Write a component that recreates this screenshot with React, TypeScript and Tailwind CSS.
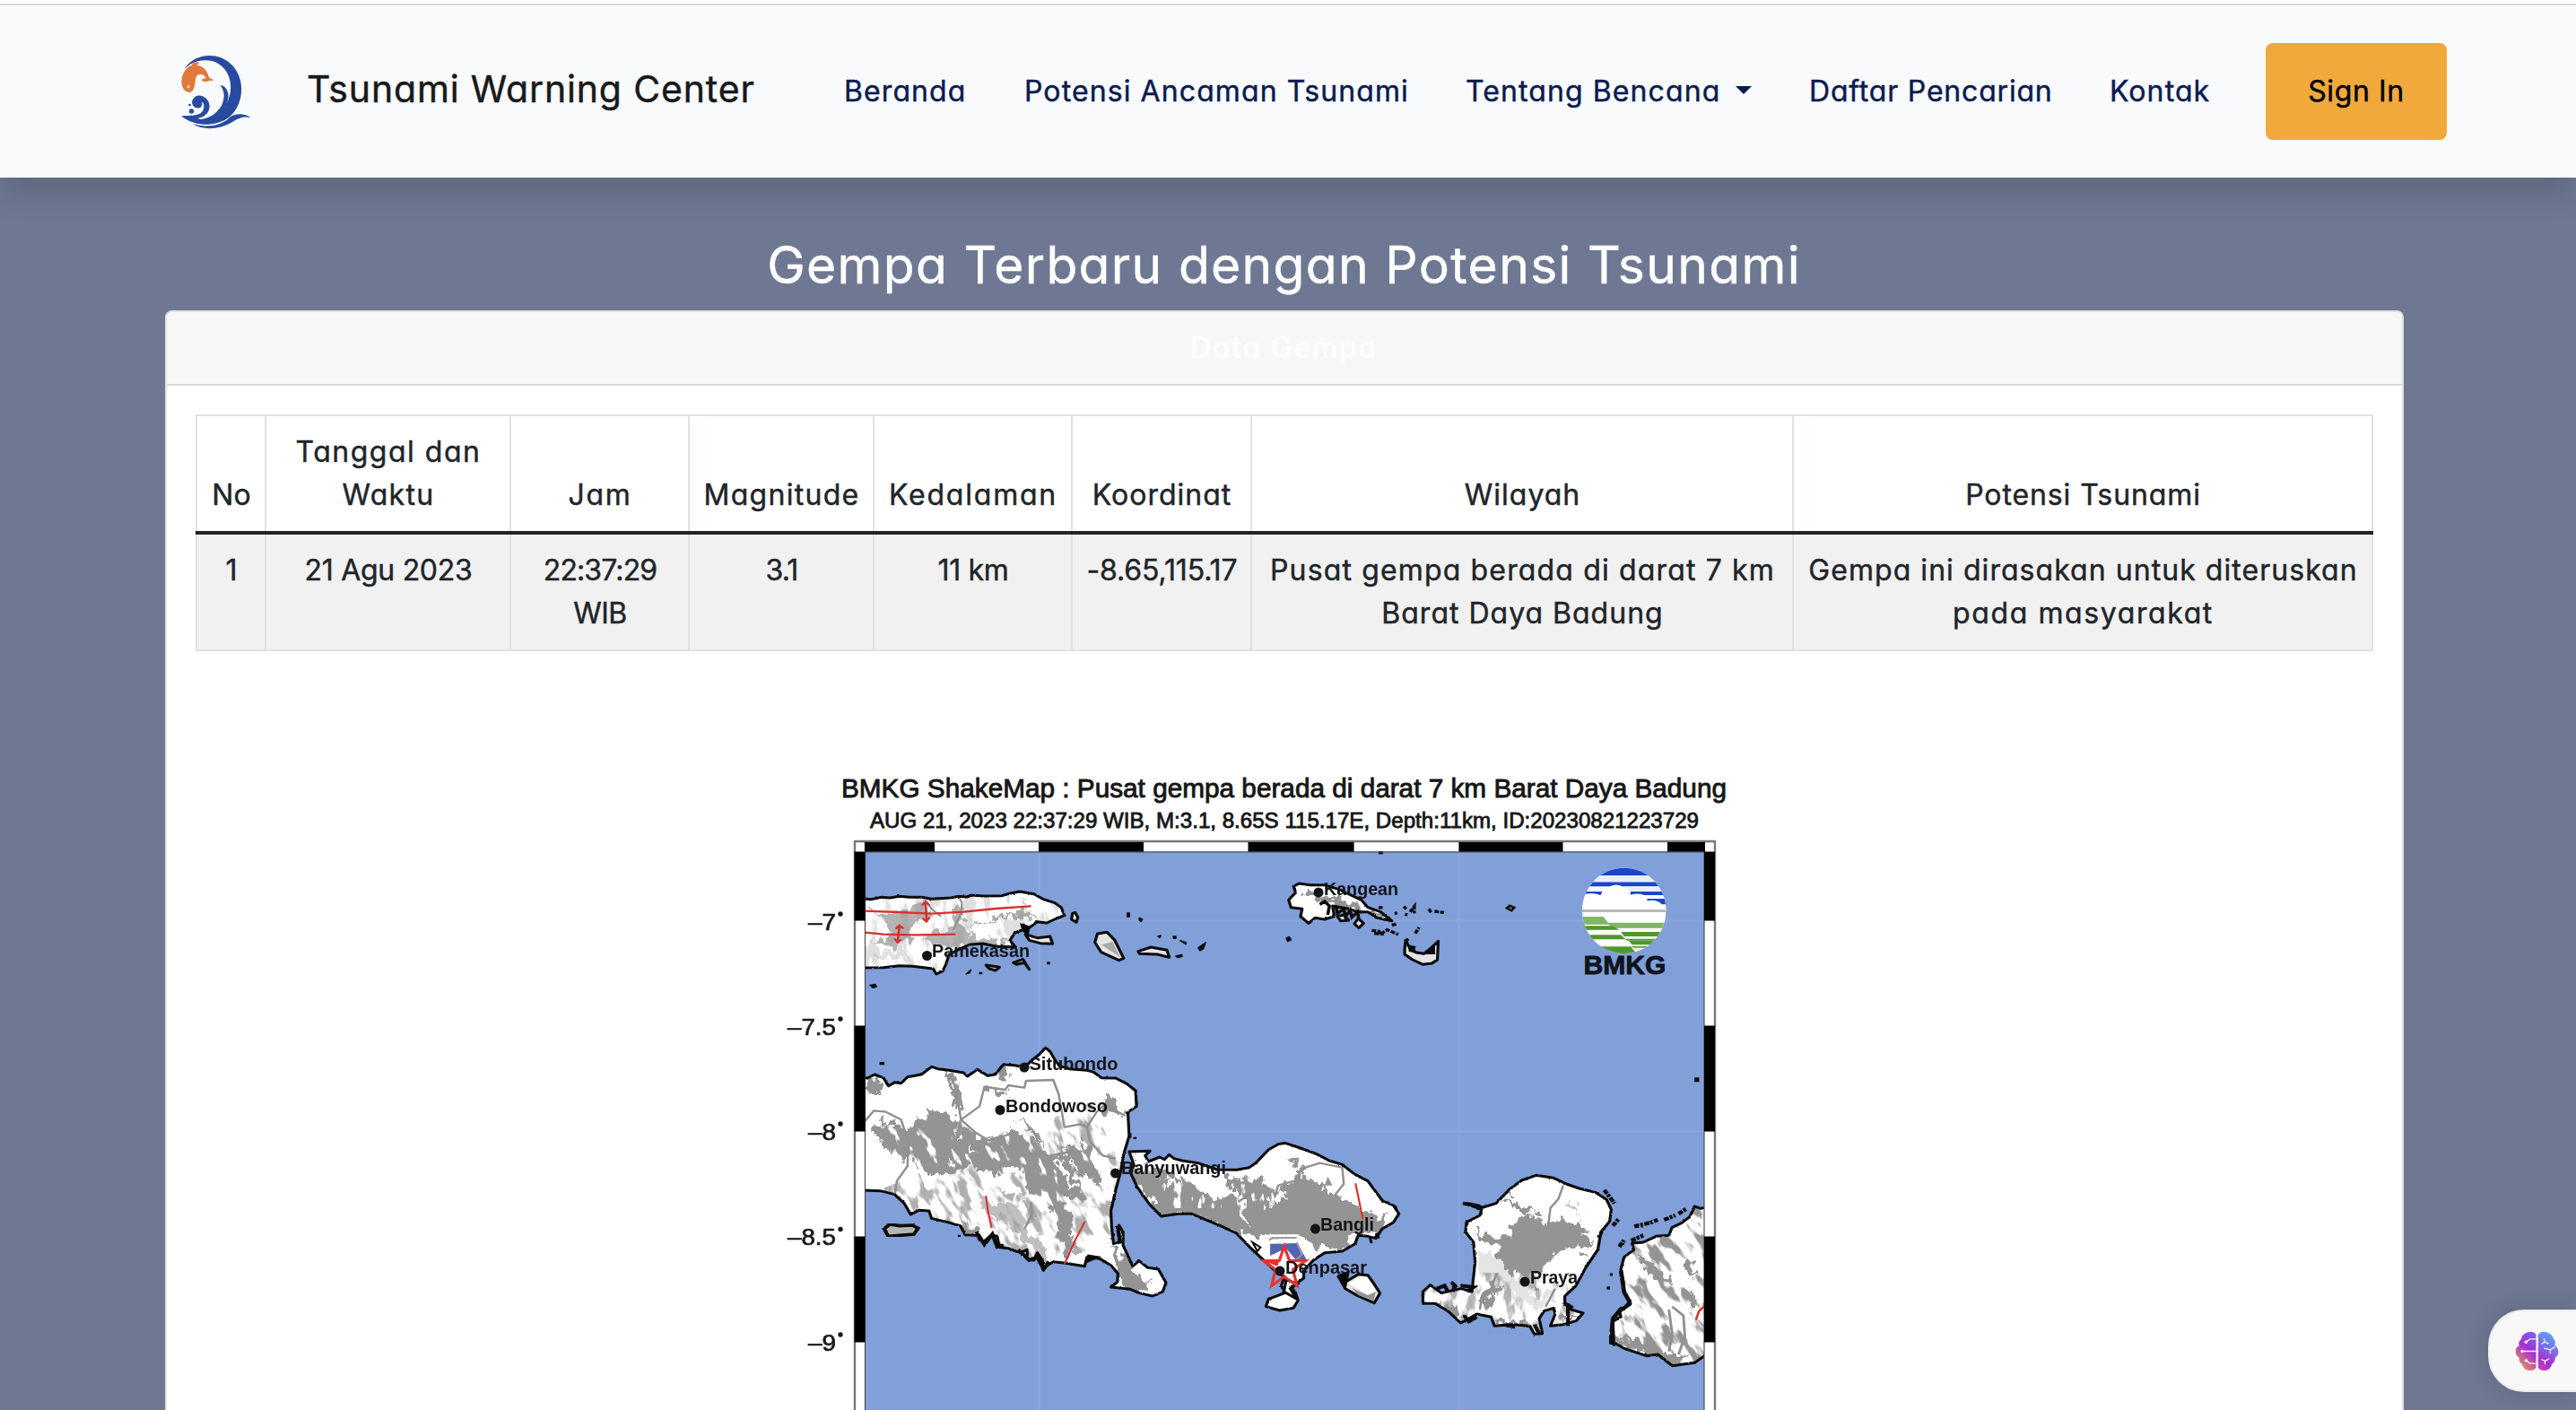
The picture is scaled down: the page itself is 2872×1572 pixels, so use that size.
import type { ReactNode } from "react";

const SEA = "#819fd9";
const RELIEF = "#949494";

function WaveLogo() {
  return (
    <svg viewBox="60 60 245 255" className="h-[85px] w-[82px]" aria-hidden="true">
      <path
        fill="#274b9f"
        d="M76 111C95 82 125 66 160 66C222 66 267 116 267 178C267 245 222 294 160 297C120 298 88 287 66 268C86 275 112 277 136 272C180 279 231 235 231 172C231 122 197 82 150 82C120 80 96 92 76 111Z"
      />
      <path fill="#f8fafc" d="M66 267C98 271 128 266 148 246L215 236L204 262C180 281 150 282 122 275C100 277 82 274 66 267Z" />
      <path fill="#274b9f" d="M66 268C90 266 138 272 141 241C143 228 138 220 134 224C138 238 127 243 116 241C105 237 99 226 103 215C109 201 124 196 137 202C154 209 162 224 160 240C157 262 139 273 120 276C150 275 184 262 200 234C212 210 212 184 196 166C206 163 220 175 223 195C226 225 205 258 178 272C148 287 94 286 66 268Z" />
      <path fill="#274b9f" d="M88 277C130 284 190 272 222 226L240 250C215 288 180 297 150 297C125 296 103 289 88 277Z" />
      <path fill="#274b9f" d="M103 294C150 306 188 296 222 275C248 258 276 258 299 274C272 267 254 278 238 287C198 313 142 318 103 294Z" />
      <path fill="#f8fafc" d="M98 291C150 303 200 296 236 265C204 301 150 311 98 291Z" />
      <path fill="#f8fafc" d="M121 276C150 272 172 264 190 247C176 266 156 276 130 279Z" />
      <circle cx="100" cy="252" r="8" fill="#274b9f" />
      <circle cx="94" cy="231" r="4" fill="#274b9f" />
      <path
        fill="#e07a3a"
        d="M101 98C104 90 113 86 125 89C124 94 120 97 116 98C136 99 151 112 157 134C161 144 168 143 175 147C166 151 162 150 159 149C155 154 146 156 132 148C136 142 145 144 148 140C141 128 131 126 122 130C109 138 116 160 107 178C102 189 93 191 84 187C70 179 64 161 68 140C74 115 88 102 101 98Z"
      />
      <ellipse cx="90" cy="170" rx="3" ry="5" fill="#fff" />
    </svg>
  );
}

function BrainIcon() {
  return (
    <svg viewBox="190 160 148 136" className="h-[45px] w-[49px]" aria-hidden="true">
      <defs>
        <linearGradient id="brainLeft" x1="0.75" y1="0" x2="0.25" y2="1">
          <stop offset="0" stopColor="#7b62e6" />
          <stop offset="0.42" stopColor="#a42fd8" />
          <stop offset="0.68" stopColor="#c85f9a" />
          <stop offset="1" stopColor="#e3a04c" />
        </linearGradient>
        <linearGradient id="brainRight" x1="0.6" y1="0" x2="0.3" y2="1">
          <stop offset="0" stopColor="#5aa6f2" />
          <stop offset="0.45" stopColor="#7a6be8" />
          <stop offset="0.75" stopColor="#a82fd2" />
          <stop offset="1" stopColor="#bd3fc0" />
        </linearGradient>
      </defs>
      <path
        fill="url(#brainLeft)"
        d="M261 172C255 162 240 159 228 166C219 169 212 177 211 187C203 193 201 202 204 209C195 213 192 221 192 230C192 239 197 246 204 249C202 259 207 268 214 272C217 286 229 294 241 293C250 293 257 289 261 283Z"
      />
      <path
        fill="url(#brainRight)"
        d="M268 172C274 162 288 159 300 165C312 169 318 178 319 185C325 191 327 200 324 208C332 213 337 221 336 232C335 241 330 247 325 249C326 259 322 267 314 271C311 285 302 293 289 293C279 294 272 289 268 283Z"
      />
      <g stroke="#f6edf9" strokeWidth="4" fill="none" strokeLinecap="round">
        <path d="M261 187H240L228 196M261 228H215M261 269H240L228 259" />
        <path d="M280 203L290 197L302 202M290 197L288 186M289 218L309 223L323 214M309 223V235M280 256L291 261L304 254M291 261V270" />
      </g>
      <g fill="#f6edf9">
        <circle cx="227" cy="197" r="5" />
        <circle cx="214" cy="228" r="5" />
        <circle cx="227" cy="259" r="5" />
      </g>
    </svg>
  );
}

const madura =
  "M270 484L310 488L345 481L370 483L400 478L430 481L470 481L500 487L560 483L585 478L610 480L625 474L660 477L720 476L745 468L775 462L820 470L850 488L885 500L905 515L915 542L890 552L860 567L830 563L805 583L785 573L790 588L760 600L745 625L762 648L700 645L660 636L620 639L600 648L555 672L545 705L535 728L515 738L505 720L440 712L400 710L350 716L270 717Z";
const java =
  "M270 180L300 186L322 174L350 185L366 212L385 200L405 203L425 182L470 173L500 148L520 155L555 160L600 168L612 180L643 157L675 178L698 174L725 140L760 143L790 150L815 125L835 108L857 84L872 100L885 125L900 145L930 155L985 160L1005 165L1030 185L1075 186L1110 205L1137 228L1140 280L1113 300L1117 380L1100 440L1090 500L1075 560L1060 630L1062 680L1068 740L1085 735L1085 678L1098 700L1098 745L1128 815L1148 797L1175 820L1208 825L1232 870L1222 900L1190 915L1150 905L1120 892L1060 885L1080 868L1082 840L1060 812L1025 790L985 785L978 815L918 805L880 800L862 812L848 826L846 795L830 770L820 795L800 790L798 760L775 770L740 755L712 752L705 715L688 710L660 735L640 712L605 710L590 680L550 668L500 655L492 630L460 628L435 642L415 605L385 575L340 563L270 560Z";
const bali =
  "M-395 432L-330 430L-345 445L-335 465L-300 450L-285 458L-270 442L-255 455L-230 462L-180 470L-120 492L-60 493L-20 485L0 470L40 425L70 407L92 403L140 420L190 440L230 462L270 475L310 508L350 530L395 595L430 612L447 640L430 668L395 690L375 722L350 715L320 712L310 740L270 765L215 770L180 795L150 830L150 855L128 872L112 885L125 905L132 930L118 955L75 963L32 950L40 925L90 905L80 880L90 850L60 830L20 790L-15 755L-60 705L-110 680L-200 640L-240 640L-295 648L-330 610L-370 550L-392 500L-380 478Z";
const lombok =
  "M650 605L680 610L710 618L750 605L790 560L830 528L875 511L930 520L970 540L1010 555L1060 568L1095 592L1110 625L1105 665L1078 700L1068 760L1030 820L1000 880L965 915L965 940L985 960L1022 972L1000 998L960 1010L920 1015L935 975L930 955L900 965L885 990L895 1040L870 1042L855 1015L800 1010L745 1015L735 985L690 975L640 1005L600 965L560 940L522 940L522 900L545 878L580 905L640 890L675 900L685 800L680 735L655 700L658 668L700 645L705 625Z";
const sumbawa =
  "M1410 618L1390 622L1370 615L1355 650L1330 670L1300 685L1290 712L1250 715L1210 735L1175 738L1180 760L1150 785L1140 825L1148 870L1150 905L1170 940L1135 960L1140 985L1115 1000L1118 1070L1150 1090L1220 1115L1255 1110L1300 1148L1370 1138L1410 1108Z";

function Land({ id, d, children }: { id: string; d: string; children?: ReactNode }) {
  return (
    <g>
      <clipPath id={id}>
        <path d={d} />
      </clipPath>
      <path d={d} fill="#fff" />
      <g clipPath={`url(#${id})`}>{children}</g>
      <path d={d} fill="none" stroke="#0c0c0c" strokeWidth="9" strokeLinejoin="round" filter="url(#coast)" />
    </g>
  );
}

function Islet({ d }: { d: string }) {
  return <path d={d} fill="#e4e4e4" stroke="#0c0c0c" strokeWidth="9" strokeLinejoin="round" />;
}

const townLabels: [string, number, number, number, number, number][] = [
  ["Pamekasan", 1039, 1067, 1033.5, 1065.5, 109],
  ["Kangean", 1476, 997.5, 1470, 995, 83],
  ["Situbondo", 1147.5, 1192.5, 1142, 1190, 99],
  ["Bondowoso", 1121, 1239.5, 1115, 1237.5, 114],
  ["Banyuwangi", 1250, 1309, 1243.5, 1308, 117],
  ["Bangli", 1472, 1372, 1466.5, 1370, 60],
  ["Denpasar", 1433, 1419.5, 1427, 1417, 91],
  ["Praya", 1706, 1431, 1700, 1429, 53],
];

const latitudes: [string, number, number, number][] = [
  ["–7", 1036.5, 901, 31],
  ["–7.5", 1153.5, 878, 54],
  ["–8", 1270.5, 901, 31],
  ["–8.5", 1388, 878, 54],
  ["–9", 1505.5, 901, 31],
];

function ShakeMap() {
  return (
    <svg viewBox="872 840 1120 732" className="h-[732px] w-[1120px] shrink-0 font-['Liberation_Sans',Arial,sans-serif] [-webkit-text-stroke:0]">
      <defs>
        <filter id="coast" x="-5%" y="-5%" width="110%" height="110%" colorInterpolationFilters="sRGB">
          <feTurbulence type="fractalNoise" baseFrequency="0.09" numOctaves="2" seed="4" />
          <feDisplacementMap in="SourceGraphic" scale="6" xChannelSelector="R" yChannelSelector="G" />
        </filter>
        <filter id="rough" x="-10%" y="-10%" width="120%" height="120%" colorInterpolationFilters="sRGB">
          <feTurbulence type="fractalNoise" baseFrequency="0.04 0.03" numOctaves="3" seed="9" />
          <feDisplacementMap in="SourceGraphic" scale="60" xChannelSelector="R" yChannelSelector="G" />
          <feGaussianBlur stdDeviation="1.5" />
        </filter>
        <filter id="ridges" x="0" y="0" width="100%" height="100%" colorInterpolationFilters="sRGB">
          <feTurbulence type="fractalNoise" baseFrequency="0.03 0.011" numOctaves="3" seed="21" />
          <feColorMatrix values="0 0 0 0 0.58  0 0 0 0 0.58  0 0 0 0 0.58  8 0 0 0 -4.1" />
        </filter>
        <filter id="glints" x="0" y="0" width="100%" height="100%" colorInterpolationFilters="sRGB">
          <feTurbulence type="fractalNoise" baseFrequency="0.035 0.014" numOctaves="3" seed="33" />
          <feColorMatrix values="0 0 0 0 1  0 0 0 0 1  0 0 0 0 1  12 0 0 0 -7.3" />
        </filter>
        <clipPath id="sea">
          <rect x="964" y="949" width="936" height="623" />
        </clipPath>
        <clipPath id="logoDisc">
          <ellipse cx="1150" cy="526" rx="131" ry="143" />
        </clipPath>
      </defs>

      <text x="938" y="889" fontSize="30" textLength="987" lengthAdjust="spacingAndGlyphs" fill="#161616" stroke="#161616" strokeWidth="0.9">
        BMKG ShakeMap : Pusat gempa berada di darat 7 km Barat Daya Badung
      </text>
      <text x="970" y="923" fontSize="23.5" textLength="924" lengthAdjust="spacingAndGlyphs" fill="#161616" stroke="#161616" strokeWidth="0.8">
        AUG 21, 2023 22:37:29 WIB, M:3.1, 8.65S 115.17E, Depth:11km, ID:20230821223729
      </text>

      <rect x="964" y="949" width="936" height="640" fill={SEA} />
      <g clipPath="url(#sea)">
        <path d="M1158.5 949V1572M1626.5 949V1572M964 1026.5H1900M964 1261.5H1900" stroke="#8ba7de" strokeWidth="2.5" />

        <g transform="translate(860 840) scale(.35714 .33333)">
          <Land id="madura" d={madura}>
            <g filter="url(#rough)" fill={RELIEF}>
              <path d="M290 520L360 545L430 520L480 490L500 540L450 560L430 620L390 650L330 640L300 650L380 600L350 560Z" opacity=".7" />
              <path d="M560 545L590 510L600 530L590 580L640 610L740 630L700 645L600 640L560 660L470 620L500 600L570 590Z" opacity=".7" />
              <path d="M600 570L700 565L740 540L820 550L800 530L780 480L800 520L740 530L660 575Z" opacity=".8" />
              <path d="M300 670L360 665L420 640L430 700L400 690Z" opacity=".3" />
            </g>
            <rect x="250" y="440" width="700" height="300" filter="url(#ridges)" opacity=".3" />
            <path d="M585 480L595 500L592 535L568 590M480 490L500 520L530 545" fill="none" stroke="#909090" strokeWidth="6" />
          </Land>
          <Islet d="M793 605L830 617L870 612L878 637L840 635L805 625Z" />
          <path d="M780 572L805 580L800 610L785 590Z" stroke="#0c0c0c" strokeWidth="6" />
          <Islet d="M948 532L957 548L952 565L937 555L940 535Z" />
          <Islet d="M1048 598L1072 625L1100 685L1085 692L1030 665L1010 632L1018 603Z" />
          <path d="M1030 640L1065 630L1090 682Z" fill="#aaa" />
          <Islet d="M1145 662L1185 648L1235 658L1242 682L1205 672L1150 670Z" />
          <Islet d="M670 708L712 715L700 726L680 720Z" />
          <Islet d="M755 700L785 688L805 722L790 700L765 706Z" />
          <g fill="#0c0c0c" stroke="#0c0c0c" strokeWidth="4" strokeLinejoin="round">
            <path d="M1111 534h7v12h-7zM1148 550l10 4l-3 8l-6-3zM1206 612l10-3l-3 7zM1254 612h9v7h-7zM1276 626l18 6v6zM1262 678l20-5v6l-12 4zM1332 650l24-18l-8 22l-10 6zM608 738l15-14l-4 10zM650 733h7v4h-7zM862 699h6v5h-6zM308 775l16-3l5 8l-12 4zM340 1034h11v6h-11z" />
          </g>
          <g stroke="#d9302c" strokeWidth="7" fill="none" strokeLinecap="round">
            <path d="M292 527L400 531L500 536L600 530L700 519L808 511M292 599L350 605L450 607L572 605" />
            <path d="M481 497L485 562M472 506L480 497L492 506M474 553L484 562L493 550M400 575L394 632M390 585L400 575L410 584M386 622L394 632L403 624" />
          </g>
        </g>

        <g transform="translate(1400 840) scale(.35714 .33333)">
          <Land
            id="kangean"
            d="M118 445L135 435L170 440L215 440L260 455L300 475L330 490L350 515L390 530L425 560L380 550L350 530L320 530L290 520L240 510L245 545L215 555L185 550L165 568L140 545L145 520L110 515L103 490L125 465Z"
          >
            <path filter="url(#rough)" fill={RELIEF} d="M160 445L200 480L270 490L330 510L430 560L340 540L240 505L150 480Z" />
          </Land>
          <Islet d="M255 545L275 540L290 558L265 560Z" />
          <Islet d="M320 552L337 568L322 583L308 570Z" />
          <path
            d="M200 505L215 495L230 510L225 540M250 510L255 535L275 520L280 545L295 525L300 548L318 530L322 555"
            fill="none"
            stroke="#0c0c0c"
            strokeWidth="10"
          />
          <Islet d="M468 625L480 650L500 665L525 670L548 650L570 628L567 690L550 702L522 706L490 690L465 672L465 655Z" />
          <path d="M475 640L500 645L495 665L530 668L560 640L560 672L510 672L478 662Z" fill="#0c0c0c" />
          <path
            fill="none"
            stroke="#0c0c0c"
            strokeWidth="10"
            strokeDasharray="14 4"
            d="M362 592L385 595L390 605L410 590L445 605M370 602L400 604M425 575L440 570M462 512L470 520M466 538L474 540M482 530L495 512V535M540 520L550 535M558 528L588 532M498 602L510 582M434 536L442 533M468 630L476 620"
          />
          <path fill="#0c0c0c" stroke="#0c0c0c" strokeWidth="5" d="M782 518l10-10l17 7l-10 12zM96 618l8-4l6 9l-10 5zM386 329h9v5h-9zM1372 1086h10v10h-10zM386 513h8v5h-8z" />
          <path d="M789 517L799 513L800 522Z" fill="#777" />

          <ellipse cx="1150" cy="526" rx="131" ry="143" fill="#fff" />
          <g clipPath="url(#logoDisc)">
            <path fill="#1b46c9" d="M1010 380H1290V408H1010ZM1010 430H1290V445H1144Q1125 434 1106 445H1010ZM1010 462H1082L1076 475Q1050 462 1020 473ZM1170 462H1290V474H1214Q1190 466 1170 473ZM1222 486H1290V505H1268Q1252 486 1222 493Z" />
            <path fill="#e9eefb" d="M1010 408H1290V430H1010ZM1150 445H1290V462H1170Z" />
            <path fill="#b9b9b9" d="M1010 522H1290V531H1010Z" />
            <path fill="#7fb765" d="M1010 546H1085L1100 566H1290V584H1120L1100 572H1010Z" />
            <path fill="#4f982c" d="M1010 577H1115L1135 590H1010ZM1140 597H1290V612H1150ZM1010 607H1140L1155 622H1010ZM1165 627H1290V640H1175ZM1150 620H1290V626H1160ZM1010 646H1170L1190 670H1010ZM1170 645H1290V650H1180Z" />
            <path fill="#e6f0e0" d="M1175 650L1290 650V670H1195Z" />
          </g>
        </g>
        <text x="1765.5" y="1085.5" fontSize="29" fontWeight="bold" textLength="92" lengthAdjust="spacingAndGlyphs" fill="#10131a" stroke="#10131a" strokeWidth="0.8">
          BMKG
        </text>

        <g transform="translate(860 1140) scale(.35714 .33333)">
          <Land id="java" d={java}>
            <rect x="250" y="420" width="850" height="440" filter="url(#ridges)" opacity=".75" transform="rotate(-24 650 600) translate(0 20)" />
            <g filter="url(#rough)" fill={RELIEF}>
              <path d="M310 350L370 325L420 370L450 320L500 290L560 310L600 350L640 370L680 400L740 355L830 400L880 450L910 540L930 640L950 740L915 800L890 660L850 590L800 560L790 500L740 490L690 510L620 480L560 510L500 510L430 460L380 440L330 390Z" />
              <path d="M700 400L740 375L800 380L850 430L890 440L960 400L1010 430L1000 480L1040 550L960 500L930 450L980 600L870 560L840 430Z" />
              <path d="M660 215L720 220L740 250L690 235ZM770 320L800 340L860 410L830 400Z" />
              <path d="M1040 240L1085 265L1100 310L1040 300ZM705 150L745 165L740 195L710 190ZM300 190L345 195L335 240L305 235ZM545 165L570 180L600 310L575 290Z" />
              <path d="M1060 740L1105 790L1130 840L1180 870L1170 900L1090 885ZM590 680L650 690L640 712L600 705Z" />
              <path d="M640 560L700 610L780 600L820 640L800 700L860 760L840 790L780 720L720 660L670 640Z" opacity=".6" />
            </g>
            <rect x="250" y="250" width="850" height="520" filter="url(#glints)" transform="rotate(-24 650 600)" />
            <g filter="url(#rough)" fill="#fff">
              <path d="M690 510L730 500L790 570L760 590L690 540ZM890 450L915 460L950 560L930 560ZM550 440L565 460L560 490ZM575 350L590 380L580 400ZM620 410L640 440L625 440Z" />
            </g>
            <path
              fill="none"
              stroke="#909090"
              strokeWidth="7"
              strokeLinejoin="round"
              d="M292 330L320 295L355 298L405 325L428 400L425 480L392 530L385 575M555 170L575 220L592 325L650 280L665 215L730 225L740 210L790 218L795 195L880 192L897 240L915 350L965 340L985 350L1015 300L1040 275L1105 312M592 325L640 370L680 395L740 375M985 350L995 400L1035 445L1075 455M870 445L920 435L970 430M810 600L815 640L790 690"
            />
          </Land>
          <path d="M640 700L665 742L690 708L705 750L725 745M770 760L805 795L830 785L850 825L866 800M1080 680L1090 740" fill="none" stroke="#0c0c0c" strokeWidth="12" filter="url(#coast)" />
          <path d="M990 780L1018 785L985 800Z" stroke="#0c0c0c" strokeWidth="8" />
          <g filter="url(#coast)">
            <path d="M352 690L370 675L400 680L440 678L458 688L445 708L400 712L365 715Z" fill="#b4b4b4" stroke="#0c0c0c" strokeWidth="11" />
          </g>
          <path d="M338 132h14v8h-14zM582 710h9v7h-9zM1130 383h10v7h-10zM1118 370h6v16h-6z" fill="#0c0c0c" />
          <path d="M670 582L676 630L687 685M978 667L950 725L916 805" fill="none" stroke="#d9302c" strokeWidth="6" strokeLinecap="round" />
        </g>

        <g transform="translate(1400 1140) scale(.35714 .33333)">
          <Land id="bali" d={bali}>
            <g filter="url(#rough)" fill={RELIEF}>
              <path d="M-385 490L-300 485L-220 530L-130 590L-60 580L0 520L60 560L130 520L160 510L230 570L310 610L380 650L430 650L395 680L370 710L300 710L270 750L200 760L140 720L60 710L0 720L-60 700L-200 640L-300 645L-350 570Z" />
              <path d="M95 445L130 455L125 480ZM130 490L150 480L145 530ZM-380 450L-340 455L-330 490L-370 480ZM-100 520L-50 520L0 510L10 560L-60 570Z" />
            </g>
            <rect x="-400" y="440" width="460" height="180" filter="url(#glints)" />
            <g filter="url(#rough)" fill="#fff">
              <path d="M-20 580L-40 610L-20 680L-45 660L-60 600ZM60 570L90 550L100 590L75 600ZM30 590L50 610L40 620ZM200 510L245 500L270 540L230 575L205 540ZM-290 520L-250 530L-235 560ZM-215 530L-180 560L-200 550Z" />
              <path d="M-20 715H60L70 740H150L180 780L160 850H80L20 800Z" />
            </g>
            <path d="M225 515L240 545L215 545Z" fill={RELIEF} />
            <path d="M60 580L70 545L135 525L140 490L200 470L270 485L275 540L245 580M-55 600L-20 575" fill="none" stroke="#909090" strokeWidth="7" />
          </Land>
          <path d="M45 740L130 738L160 795L130 800L95 755L45 780Z" fill="#3549a8" opacity=".85" />
          <path d="M42 722L50 713H132L138 730M92 713L82 740" fill="none" stroke="#fff" strokeWidth="8" />
          <path d="M42 728L52 720H128M128 735L145 775L120 800" fill="none" stroke="#9a9a9a" strokeWidth="6" />
          <path d="M-10 735L15 752L5 765Z" stroke="#0c0c0c" strokeWidth="6" fill="none" />
          <path d="M95 860L88 900L128 925L108 890L130 875Z" fill="none" stroke="#0c0c0c" strokeWidth="9" />
          <path d="M355 715L362 738M375 705L385 722" stroke="#0c0c0c" strokeWidth="8" />
          <path d="M89 748L105 796L156 797L116 826L129 880L89 850L50 880L62 826L24 797L74 796Z" fill="none" stroke="#e8322c" strokeWidth="9" />
          <path d="M24 797L74 796L68 815Z" fill="#e8322c" />
          <path d="M312 540L334 655" stroke="#d9302c" strokeWidth="6" strokeLinecap="round" />
          <Islet d="M258 850L285 865L320 842L350 845L370 875L388 905L370 938L320 915L280 890Z" />
          <path d="M290 872L330 850L350 855L375 900L350 912Z" fill="#fff" />
          <path d="M300 888L350 912L375 900L368 930L320 912Z" fill={RELIEF} />
          <path d="M260 845L290 835L280 885Z" stroke="#0c0c0c" strokeWidth="6" />

          <Land id="lombok" d={lombok}>
            <rect x="500" y="840" width="500" height="190" filter="url(#ridges)" opacity=".7" />
            <g filter="url(#rough)" fill={RELIEF}>
              <path d="M675 690L740 720L800 710L815 650L850 640L900 670L960 665L1040 690L1020 710L1060 740L980 740L920 790L870 850L800 840L760 800L760 750L700 730Z" />
              <path d="M765 590L800 600L850 610L880 640L820 630ZM770 560L800 580L790 590ZM690 930L740 870L770 880L720 960ZM850 880L890 890L860 900ZM560 930L620 950L650 990L590 960ZM745 990L830 1000L860 1010L750 1010ZM940 985L1000 975L960 1000ZM1010 770L1040 780L1020 790Z" />
              <path d="M960 600L1000 610L1010 640L990 620Z" opacity=".6" />
              <path d="M690 760L780 790L830 870L880 930L940 870L930 930L880 970L780 900L690 830Z" opacity=".25" />
            </g>
            <path d="M960 545L945 590L920 620L912 690M752 840L735 890L705 920L700 960M935 890L905 950" fill="none" stroke="#909090" strokeWidth="7" />
          </Land>
          <path
            d="M648 605L672 608L700 615M565 890L590 880L600 900M610 868L622 880L615 900M640 880L680 885L660 900M650 980L665 1000L690 985M780 1012L810 1018M870 1010L885 1040M965 940L990 955M1080 700L1070 720M975 940V1015"
            fill="none"
            stroke="#0c0c0c"
            strokeWidth="12"
            filter="url(#coast)"
          />
          <path
            d="M1088 560L1120 605M1115 680L1132 658M1135 750L1150 728M1172 730L1210 712M1182 682L1230 670L1255 660M1275 660L1310 645M1320 640L1345 622"
            fill="none"
            stroke="#0c0c0c"
            strokeWidth="13"
            strokeDasharray="16 3 9 4"
            filter="url(#coast)"
          />
          <circle cx="1101" cy="888" r="6" fill="#0c0c0c" />
          <circle cx="1110" cy="843" r="5" fill="#0c0c0c" />

          <Land id="sumbawa" d={sumbawa}>
            <rect x="1050" y="500" width="500" height="760" filter="url(#ridges)" transform="rotate(-28 1280 880)" />
            <g filter="url(#rough)" fill={RELIEF}>
              <path d="M1330 780L1370 790L1380 850L1340 840ZM1180 770L1230 800L1300 870L1290 870L1230 850ZM1130 1050L1200 1060L1240 1100L1280 1110L1360 1110L1310 1150L1220 1120ZM1340 890L1380 940L1370 960Z" />
            </g>
            <path d="M1300 950L1335 980L1340 1050L1320 1110M1290 960L1300 1040L1290 1100" fill="none" stroke="#909090" strokeWidth="8" />
          </Land>
          <path d="M1140 830L1150 900L1170 940L1135 965L1115 990L1108 1070L1125 1075" fill="none" stroke="#0c0c0c" strokeWidth="13" filter="url(#coast)" />
          <path d="M1374 995L1384 965L1405 945" fill="none" stroke="#d9302c" strokeWidth="7" />
        </g>

        {townLabels.map(([name, x, y, cx, cy, w]) => (
          <g key={name} fill="#121418">
            <circle cx={cx} cy={cy} r="5.5" />
            <text x={x} y={y} fontSize="20" fontWeight="bold" textLength={w} lengthAdjust="spacingAndGlyphs">
              {name}
            </text>
          </g>
        ))}
      </g>

      <path d="M953 938H1912M953 937V1572M1912 937V1572" stroke="#777" strokeWidth="2.4" fill="none" />
      <path d="M964 950H1900M964.500 938V1572M1900 938V1572" stroke="#4d4d4d" strokeWidth="1.2" fill="none" />
      <path d="M964 939H1042V949.500H964ZM1158 939H1275V949.500H1158ZM1391.500 939H1509.600V949.500H1391.500ZM1626.400 939H1742.500V949.500H1626.400ZM1859 939H1901V949.500H1859Z" fill="#000" />
      <path d="M952.500 949.500H964.500V1026.500H952.500ZM952.500 1143.500H964.500V1261.500H952.500ZM952.500 1378.500H964.500V1496.500H952.500Z" fill="#000" />
      <path d="M1900 949.500H1912V1026.500H1900ZM1900 1143.500H1912V1261.500H1900ZM1900 1378.500H1912V1496.500H1900Z" fill="#000" />

      {latitudes.map(([label, y, x, w]) => (
        <g key={label} fill="#1a1a1a">
          <text x={x} y={y} fontSize="25" textLength={w} lengthAdjust="spacingAndGlyphs" stroke="#1a1a1a" strokeWidth="0.7">
            {label}
          </text>
          <circle cx="937" cy={y - 17.5} r="2.7" />
        </g>
      ))}
    </svg>
  );
}

const cell = "border-2 border-[#dee2e6] pl-[2px] pr-0 py-4 text-center font-normal whitespace-nowrap";

function HeadCell({ children }: { children: ReactNode }) {
  return <th className={`${cell} border-b-4 border-b-[#212529] align-bottom`}>{children}</th>;
}

function BodyCell({ children }: { children: ReactNode }) {
  return <td className={`${cell} align-top`}>{children}</td>;
}

export default function App() {
  return (
    <div className="flex h-[1572px] w-[2872px] flex-col overflow-hidden bg-[#6f7893] font-['Inter',sans-serif] text-[32px] leading-[48px] text-[#212529] [-webkit-text-stroke:0.45px] [font-feature-settings:'cv11']">
      <header className="relative z-10 flex h-[198px] shrink-0 items-center border-t-[6px] border-[#dcdcdc] bg-[#f8fafc] pl-[200px] text-[#0a1b4f] shadow-[0_16px_32px_rgba(0,0,0,0.15)] [border-image:linear-gradient(to_bottom,#fff_0_4px,#dcdcdc_4px_6px)_6_0_0_0]">
        <WaveLogo />
        <span className="ml-[60px] w-[599px] pb-[6px] text-[41px] leading-[60px] tracking-[0.85px] whitespace-nowrap text-[#18191b]">Tsunami Warning Center</span>
        <nav className="flex items-center whitespace-nowrap">
          <a className="w-[201px] tracking-[1.1px]">Beranda</a>
          <a className="w-[492px] tracking-[1.1px]">Potensi Ancaman Tsunami</a>
          <a className="flex w-[383px] items-center tracking-[1.1px]">
            Tentang Bencana
            <span className="mt-[-3px] ml-[17px] border-x-[9px] border-t-[9px] border-x-transparent border-t-[#0a1b4f]" />
          </a>
          <a className="w-[335px] tracking-[0.8px]">Daftar Pencarian</a>
          <a className="w-[174px] tracking-[1.1px]">Kontak</a>
          <a className="flex h-[108px] w-[202px] items-center justify-center rounded-lg bg-[#f1a93c] tracking-[0.6px] text-black">Sign In</a>
        </nav>
      </header>

      <main className="flex min-h-0 flex-1 flex-col items-center pt-16 pr-[9px]">
        <h1 className="mb-[17px] text-[57px] leading-[67px] tracking-[1.3px] text-white">Gempa Terbaru dengan Potensi Tsunami</h1>
        <section className="flex min-h-0 w-[2496px] flex-1 flex-col rounded-t-lg border-2 border-b-0 border-[#dfdfdf] bg-white">
          <div className="h-[82px] shrink-0 rounded-t-[6px] border-b-2 border-[#d8d8d8] bg-[#f7f7f7] pt-4 text-center font-medium tracking-[1.6px] text-white">
            Data Gempa
          </div>
          <div className="flex min-h-0 flex-1 flex-col items-center overflow-hidden pt-8">
            <table className="w-[2428px] shrink-0 table-fixed border-collapse">
              <colgroup>
                <col className="w-[77px]" />
                <col className="w-[273px]" />
                <col className="w-[199px]" />
                <col className="w-[206px]" />
                <col className="w-[221px]" />
                <col className="w-[200px]" />
                <col className="w-[604px]" />
                <col />
              </colgroup>
              <thead>
                <tr className="h-[131px]">
                  <HeadCell>No</HeadCell>
                  <HeadCell>
                    <span className="tracking-[1.5px]">Tanggal dan</span>
                    <br />
                    <span className="tracking-[1.3px]">Waktu</span>
                  </HeadCell>
                  <HeadCell>
                    <span className="tracking-[1.7px]">Jam</span>
                  </HeadCell>
                  <HeadCell>
                    <span className="tracking-[1.3px]">Magnitude</span>
                  </HeadCell>
                  <HeadCell>
                    <span className="tracking-[1.8px]">Kedalaman</span>
                  </HeadCell>
                  <HeadCell>
                    <span className="tracking-[1px]">Koordinat</span>
                  </HeadCell>
                  <HeadCell>
                    <span className="tracking-[1px]">Wilayah</span>
                  </HeadCell>
                  <HeadCell>
                    <span className="tracking-[0.9px]">Potensi Tsunami</span>
                  </HeadCell>
                </tr>
              </thead>
              <tbody>
                <tr className="h-[131px] bg-[#f1f1f1]">
                  <BodyCell>1</BodyCell>
                  <BodyCell>
                    <span className="tracking-[-0.3px]">21 Agu 2023</span>
                  </BodyCell>
                  <BodyCell>
                    <span className="tracking-[-0.9px]">22:37:29</span>
                    <br />
                    <span className="tracking-[-0.5px]">WIB</span>
                  </BodyCell>
                  <BodyCell>
                    <span className="tracking-[-0.8px]">3.1</span>
                  </BodyCell>
                  <BodyCell>
                    <span className="tracking-[-0.3px]">11 km</span>
                  </BodyCell>
                  <BodyCell>
                    <span className="tracking-[-0.1px]">-8.65,115.17</span>
                  </BodyCell>
                  <BodyCell>
                    <span className="tracking-[1.15px]">Pusat gempa berada di darat 7 km</span>
                    <br />
                    <span className="tracking-[1px]">Barat Daya Badung</span>
                  </BodyCell>
                  <BodyCell>
                    <span className="tracking-[1.05px]">Gempa ini dirasakan untuk diteruskan</span>
                    <br />
                    <span className="tracking-[1.6px]">pada masyarakat</span>
                  </BodyCell>
                </tr>
              </tbody>
            </table>
            <div className="mt-[114px] flex justify-center">
              <ShakeMap />
            </div>
          </div>
        </section>
      </main>

      <div className="absolute top-[1460px] left-[2774px] z-20 flex h-[92px] w-[98px] items-center rounded-l-[40px] border-2 border-r-0 border-[#ebebeb] bg-[#f8f8f8] pl-7 shadow-[0_0_24px_rgba(0,0,0,0.16)]">
        <BrainIcon />
      </div>
    </div>
  );
}
